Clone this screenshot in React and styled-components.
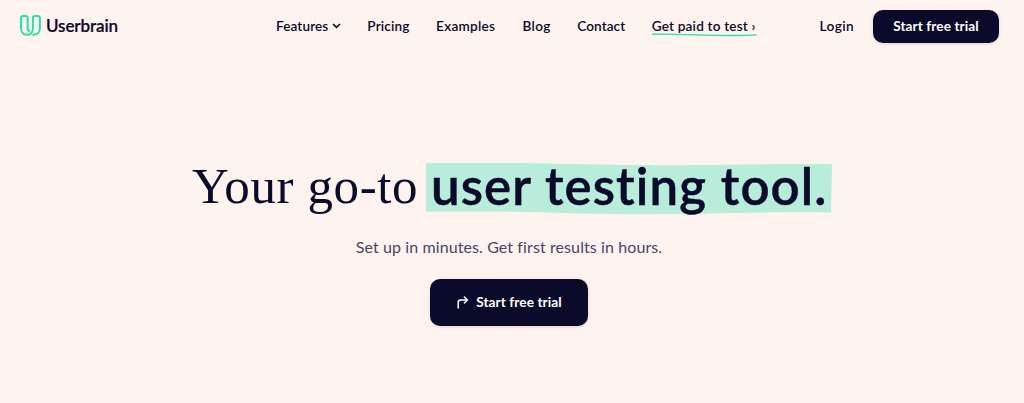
import styled, { createGlobalStyle } from "styled-components";

const links = [
  { label: "Features", width: 65, spacing: 0.1, menu: true },
  { label: "Pricing", width: 42.4, spacing: 0.12 },
  { label: "Examples", width: 60, spacing: 0.28 },
  { label: "Blog", width: 28.6, spacing: 0.35 },
  { label: "Contact", width: 48, spacing: 0.05 },
];

const App = () => {
  return (
    <Page>
      <GlobalStyle />
      <Header>
        <Logo>
          <svg width="21" height="21" viewBox="0 0 21 21" fill="none">
            <path
              d="M9.2 15.9C8.2 15.7 7.7 15 7.7 13.8V3.2C7.7 1.8 7 1 5.7 1H3.3C1.9 1 1 1.9 1 3.2V13C1 17.2 3.5 19.8 7.1 19.8C10.7 19.8 12.9 17.2 12.9 13.5V3.2C12.9 1.8 13.7 1 15 1H17.7C19 1 19.9 1.9 19.9 3.2V13.2C19.9 17.2 17.2 19.8 13.2 19.8"
              stroke="#24e0ae"
              strokeWidth="2"
              strokeLinecap="round"
              strokeLinejoin="round"
            />
          </svg>
          <Brand>Userbrain</Brand>
        </Logo>
        <Nav>
          {links.map((link) => (
            <NavLink key={link.label} $width={link.width} $spacing={link.spacing}>
              {link.label}
              {link.menu && (
                <svg width="9" height="6" viewBox="0 0 9 6" fill="none">
                  <path d="M1 1L4.5 4.4L8 1" stroke="#0a0a2b" strokeWidth="1.6" />
                </svg>
              )}
            </NavLink>
          ))}
          <NavLink $width={104} $spacing={0.18}>
            Get paid to test ›
            <Underline width="105" height="4" viewBox="0 0 105 4" fill="none">
              <path
                d="M0.5 1.2C35 0.7 70 3.8 104 1.9"
                stroke="#24e0ae"
                strokeWidth="1.4"
                strokeLinecap="round"
              />
            </Underline>
          </NavLink>
        </Nav>
        <NavLink $width={35} $spacing={0.45}>Login</NavLink>
        <HeaderButton>Start free trial</HeaderButton>
      </Header>
      <Hero>
        <Title>
          <Lead>Your go-to</Lead>
          <Highlight>
            <Marker viewBox="0 0 406 52" preserveAspectRatio="none">
              <path
                d="M0 0H55C130 0 160 2.3 245 2.3C310 2.3 345 0.5 406 1.3L405 49.5C345 48.5 285 51.2 220 51.2C145 51.2 120 48.5 55 48.5H0Z"
                fill="#b8eddc"
              />
            </Marker>
            <span>user testing tool.</span>
          </Highlight>
        </Title>
        <Subtitle>Set up in minutes. Get first results in hours.</Subtitle>
        <HeroButton>
          <svg width="12" height="13" viewBox="0 0 12 13" fill="none">
            <path
              d="M1.2 12V6.5C1.2 4.9 2.2 4 3.7 4H10.5M7.4 1L10.5 4L7.4 7"
              stroke="#fff"
              strokeWidth="1.5"
              strokeLinecap="round"
              strokeLinejoin="round"
            />
          </svg>
          <span>Start free trial</span>
        </HeroButton>
      </Hero>
    </Page>
  );
};

export default App;

const GlobalStyle = createGlobalStyle`
  * {
    box-sizing: border-box;
  }
  body {
    margin: 0;
    background: #fff3ef;
  }
`;

const Page = styled.div`
  height: 403px;
  overflow: hidden;
  background: #fff3ef;
  color: #0a0a2b;
  font-family: Lato, sans-serif;
  font-variant-ligatures: none;
  white-space: nowrap;
`;

const Header = styled.header`
  display: flex;
  align-items: center;
  height: 53px;
  padding: 0 25px 0 20px;
`;

const Logo = styled.div`
  display: flex;
  align-items: center;
  gap: 5px;
  width: 256px;
  padding-bottom: 2px;
`;

const Brand = styled.span`
  font-size: 17px;
  font-weight: 600;
  line-height: 20px;
  letter-spacing: -0.1px;
  -webkit-text-stroke: 0.2px #0a0a2b;
`;

const Nav = styled.nav`
  display: flex;
  gap: 26.35px;
  width: 543.5px;
  padding-bottom: 2px;
`;

const NavLink = styled.a`
  position: relative;
  display: flex;
  flex: none;
  align-items: center;
  justify-content: space-between;
  width: ${(props) => props.$width}px;
  font-size: 13.6px;
  font-weight: 600;
  line-height: 18px;
  letter-spacing: ${(props) => props.$spacing}px;

  header > & {
    padding-bottom: 2px;
  }
`;

const Underline = styled.svg`
  position: absolute;
  left: 0;
  top: 16px;
`;

const Button = styled.button`
  display: flex;
  align-items: center;
  justify-content: center;
  border: 0;
  padding: 0 0 2px;
  border-radius: 10px;
  background: #0a0a2b;
  color: #fff;
  font-family: inherit;
  font-size: 13.6px;
  font-weight: 700;
  letter-spacing: 0.1px;
  box-shadow: 0 1px 3px rgba(10, 10, 43, 0.15);
`;

const HeaderButton = styled(Button)`
  width: 126px;
  height: 33px;
  margin-left: auto;
`;

const Hero = styled.main`
  display: flex;
  flex-direction: column;
  align-items: center;
  padding: 110px 6px 0 0;
`;

const Title = styled.h1`
  display: flex;
  width: 640px;
  height: 52px;
  margin: 0 0 0 6px;
  line-height: 46px;
`;

const Lead = styled.span`
  width: 234px;
  font-family: "Liberation Serif", serif;
  font-size: 51px;
  font-weight: 400;
  letter-spacing: 0.6px;
`;

const Highlight = styled.span`
  position: relative;
  width: 406px;
  padding-left: 5px;
  font-size: 51px;
  font-weight: 600;
  letter-spacing: 1.1px;
  -webkit-text-stroke: 0.5px #0a0a2b;
  span {
    position: relative;
  }
`;

const Marker = styled.svg`
  position: absolute;
  left: 0;
  top: 0;
  width: 406px;
  height: 52px;
`;

const Subtitle = styled.p`
  margin: 21px 0 0;
  color: #474660;
  font-size: 16px;
  line-height: 22px;
  letter-spacing: 0.1px;
`;

const HeroButton = styled(Button)`
  gap: 7px;
  width: 158px;
  height: 47px;
  margin-top: 21px;
  padding: 0 0 1px 1px;
`;
